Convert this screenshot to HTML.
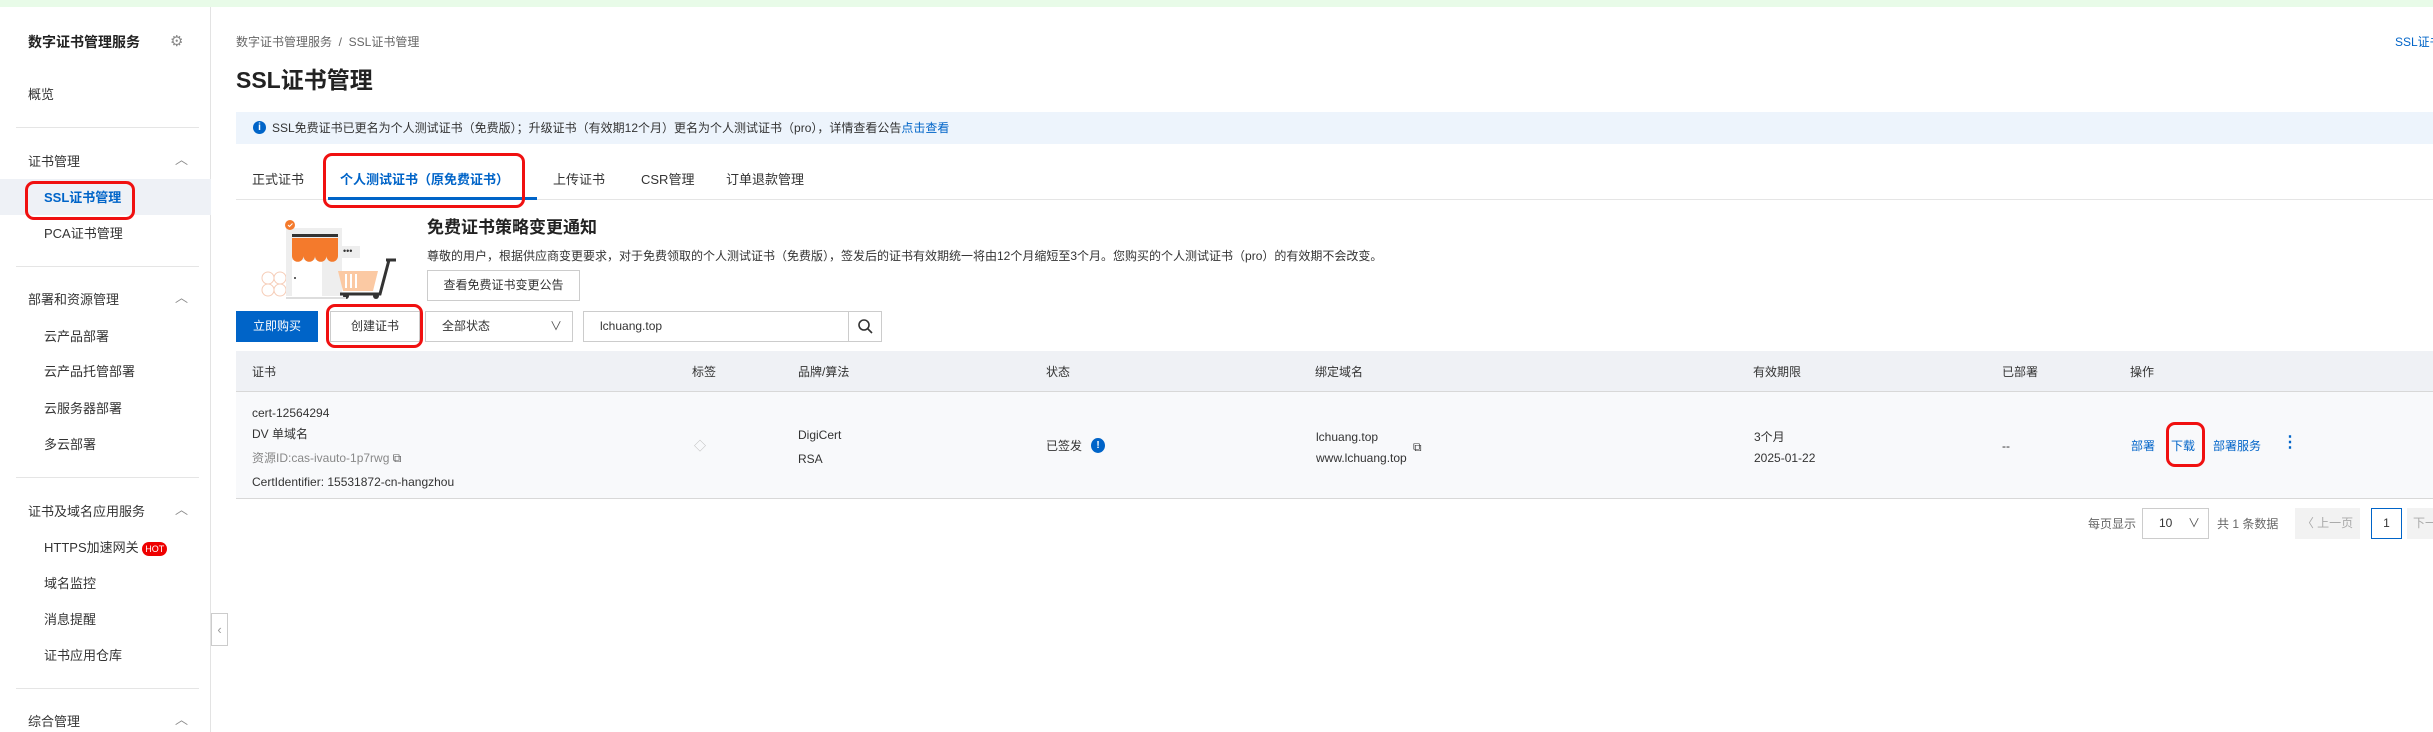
<!DOCTYPE html>
<html><head><meta charset="utf-8"><style>
*{margin:0;padding:0;box-sizing:border-box}
body{width:2433px;height:732px;overflow:hidden;background:#fff;font-family:"Liberation Sans","Noto Sans CJK SC",sans-serif;color:#333;position:relative;font-size:13px}
.a{position:absolute;white-space:nowrap;line-height:20px}
.blue{color:#0064c8}
.hr{position:absolute;height:1px;background:#e5e5e5}
.red{position:absolute;border:3px solid #f01010;border-radius:9px}
</style></head><body>
<div style="position:absolute;left:0;top:0;width:2433px;height:7px;background:#e8fbe8"></div>
<!-- sidebar -->
<div style="position:absolute;left:0;top:7px;width:211px;height:725px;border-right:1px solid #e3e3e3;background:#fff"></div>
<div class="a" style="left:28px;top:32px;font-size:14px;font-weight:bold;color:#222">数字证书管理服务</div>
<div class="a" style="left:170px;top:32px;font-size:15px;color:#888">⚙</div>
<div class="a" style="left:28px;top:85px">概览</div>
<div class="hr" style="left:16px;top:127px;width:183px"></div>
<div class="a" style="left:28px;top:152px">证书管理</div><div class="a" style="left:175px;top:150px;color:#888">︿</div>
<div style="position:absolute;left:0;top:179px;width:211px;height:36px;background:#eef1f6"></div>
<div class="a blue" style="left:44px;top:188px;font-weight:bold">SSL证书管理</div>
<div class="red" style="left:25px;top:181px;width:110px;height:39px"></div>
<div class="a" style="left:44px;top:224px">PCA证书管理</div>
<div class="hr" style="left:16px;top:266px;width:183px"></div>
<div class="a" style="left:28px;top:290px">部署和资源管理</div><div class="a" style="left:175px;top:288px;color:#888">︿</div>
<div class="a" style="left:44px;top:327px">云产品部署</div>
<div class="a" style="left:44px;top:362px">云产品托管部署</div>
<div class="a" style="left:44px;top:399px">云服务器部署</div>
<div class="a" style="left:44px;top:435px">多云部署</div>
<div class="hr" style="left:16px;top:477px;width:183px"></div>
<div class="a" style="left:28px;top:502px">证书及域名应用服务</div><div class="a" style="left:175px;top:500px;color:#888">︿</div>
<div class="a" style="left:44px;top:538px">HTTPS加速网关 <span style="display:inline-block;background:#e00;color:#fff;font-size:9px;line-height:14px;border-radius:7px;padding:0 3px;vertical-align:middle">HOT</span></div>
<div class="a" style="left:44px;top:574px">域名监控</div>
<div class="a" style="left:44px;top:610px">消息提醒</div>
<div class="a" style="left:44px;top:646px">证书应用仓库</div>
<div class="hr" style="left:16px;top:688px;width:183px"></div>
<div class="a" style="left:28px;top:712px">综合管理</div><div class="a" style="left:175px;top:710px;color:#888">︿</div>
<div style="position:absolute;left:211px;top:613px;width:17px;height:33px;border:1px solid #ccc;background:#fff;color:#999;font-size:13px;line-height:31px;text-align:center">‹</div>
<!-- main -->
<div class="a" style="left:236px;top:32px;font-size:12px;color:#666">数字证书管理服务 &nbsp;/&nbsp; SSL证书管理</div>
<div class="a blue" style="left:2395px;top:32px;font-size:12px">SSL证书</div>
<div class="a" style="left:236px;top:66px;font-size:23px;line-height:28px;font-weight:bold;color:#222">SSL证书管理</div>
<div style="position:absolute;left:236px;top:112px;width:2197px;height:32px;background:#edf4fc"></div>
<div style="position:absolute;left:253px;top:121px;width:13px;height:13px;border-radius:50%;background:#0064c8;color:#fff;font-size:10px;font-weight:bold;line-height:13px;text-align:center">i</div>
<div class="a" style="left:272px;top:118px;font-size:12px">SSL免费证书已更名为个人测试证书（免费版）；升级证书（有效期12个月）更名为个人测试证书（pro），详情查看公告<span class="blue">点击查看</span></div>
<div class="hr" style="left:236px;top:199px;width:2197px"></div>
<div class="a" style="left:252px;top:170px">正式证书</div>
<div class="a blue" style="left:340px;top:170px;font-weight:bold">个人测试证书（原免费证书）</div>
<div style="position:absolute;left:328px;top:197px;width:209px;height:3px;background:#0064c8"></div>
<div class="red" style="left:323px;top:153px;width:202px;height:55px"></div>
<div class="a" style="left:553px;top:170px">上传证书</div>
<div class="a" style="left:641px;top:170px">CSR管理</div>
<div class="a" style="left:726px;top:170px">订单退款管理</div>
<!-- illustration -->
<svg style="position:absolute;left:258px;top:218px" width="160" height="82" viewBox="0 0 160 82">
<circle cx="10" cy="60" r="6" fill="none" stroke="#f6cdb8"/><circle cx="22" cy="60" r="6" fill="none" stroke="#f6cdb8"/><circle cx="10" cy="72" r="6" fill="none" stroke="#f6cdb8"/><circle cx="22" cy="72" r="6" fill="none" stroke="#f6cdb8"/>
<rect x="28" y="10" width="56" height="68" fill="#eee"/><rect x="34" y="42" width="30" height="36" fill="#fff"/>
<circle cx="37" cy="60" r="1" fill="#333"/>
<rect x="34" y="16" width="46" height="3" fill="#333"/>
<path d="M34 20h46v18a5.75 5.75 0 0 1-11.5 0a5.75 5.75 0 0 1-11.5 0a5.75 5.75 0 0 1-11.5 0a5.75 5.75 0 0 1-11.5 0z" fill="#f47a2c"/>
<circle cx="32" cy="7" r="5" fill="#f47a2c"/><path d="M30 7l1.5 1.5 3-3" stroke="#fff" fill="none"/>
<rect x="82" y="28" width="20" height="12" fill="#eee"/><text x="85" y="36" font-size="9" fill="#333">•••</text>
<path d="M80 53h40l-5 20h-30z" fill="#fbc9a3"/>
<path d="M88 56v14M93 56v14M98 56v14" stroke="#fff" stroke-width="2"/>
<path d="M128 42h10M131 42l-9 34h-40" fill="none" stroke="#333" stroke-width="3"/>
<circle cx="88" cy="78" r="3" fill="#333"/><circle cx="118" cy="78" r="3" fill="#333"/>
<rect x="28" y="79" width="60" height="2" fill="#ddd"/>
</svg>
<div class="a" style="left:427px;top:217px;font-size:17px;line-height:22px;font-weight:bold;color:#222">免费证书策略变更通知</div>
<div class="a" style="left:427px;top:246px;font-size:12px">尊敬的用户，根据供应商变更要求，对于免费领取的个人测试证书（免费版），签发后的证书有效期统一将由12个月缩短至3个月。您购买的个人测试证书（pro）的有效期不会改变。</div>
<div class="a" style="left:427px;top:270px;width:153px;height:31px;border:1px solid #ccc;line-height:29px;text-align:center;font-size:12px">查看免费证书变更公告</div>
<!-- toolbar -->
<div class="a" style="left:236px;top:311px;width:82px;height:31px;background:#0064c8;color:#fff;line-height:31px;text-align:center;font-size:12px">立即购买</div>
<div class="a" style="left:330px;top:311px;width:90px;height:31px;border:1px solid #ccc;line-height:29px;text-align:center;font-size:12px">创建证书</div>
<div class="red" style="left:326px;top:304px;width:97px;height:44px"></div>
<div class="a" style="left:425px;top:311px;width:148px;height:31px;border:1px solid #ccc;line-height:29px;padding-left:16px;font-size:12px">全部状态<span style="position:absolute;right:10px;color:#555">∨</span></div>
<div class="a" style="left:583px;top:311px;width:299px;height:31px;border:1px solid #ccc;line-height:29px;padding-left:16px;font-size:12px">lchuang.top</div>
<div style="position:absolute;left:848px;top:311px;width:34px;height:31px;border-left:1px solid #ccc"></div>
<svg style="position:absolute;left:857px;top:318px" width="16" height="16"><circle cx="7" cy="7" r="5" fill="none" stroke="#333" stroke-width="1.6"/><path d="M11 11l4 4" stroke="#333" stroke-width="1.6"/></svg>
<!-- table -->
<div style="position:absolute;left:236px;top:351px;width:2197px;height:41px;background:#eff1f5;border-bottom:1px solid #d8d8d8"></div>
<div class="a" style="left:252px;top:362px;font-size:12px">证书</div>
<div class="a" style="left:692px;top:362px;font-size:12px">标签</div>
<div class="a" style="left:798px;top:362px;font-size:12px">品牌/算法</div>
<div class="a" style="left:1046px;top:362px;font-size:12px">状态</div>
<div class="a" style="left:1315px;top:362px;font-size:12px">绑定域名</div>
<div class="a" style="left:1753px;top:362px;font-size:12px">有效期限</div>
<div class="a" style="left:2002px;top:362px;font-size:12px">已部署</div>
<div class="a" style="left:2130px;top:362px;font-size:12px">操作</div>
<div style="position:absolute;left:236px;top:392px;width:2197px;height:107px;background:#f8f9fb;border-bottom:1px solid #d8d8d8"></div>
<div class="a" style="left:252px;top:403px;font-size:12px">cert-12564294</div>
<div class="a" style="left:252px;top:424px;font-size:12px">DV 单域名</div>
<div class="a" style="left:252px;top:448px;font-size:12px;color:#888">资源ID:cas-ivauto-1p7rwg <span style="color:#555">⧉</span></div>
<div class="a" style="left:252px;top:472px;font-size:12px">CertIdentifier: 15531872-cn-hangzhou</div>
<div class="a" style="left:694px;top:436px;font-size:12px;color:#bbb">◇</div>
<div class="a" style="left:798px;top:425px;font-size:12px">DigiCert</div>
<div class="a" style="left:798px;top:449px;font-size:12px">RSA</div>
<div class="a" style="left:1046px;top:436px;font-size:12px">已签发</div>
<div style="position:absolute;left:1091px;top:438px;width:14px;height:15px;border-radius:50%;background:#0064c8;color:#fff;font-size:10px;font-weight:bold;line-height:15px;text-align:center">!</div>
<div class="a" style="left:1316px;top:427px;font-size:12px">lchuang.top</div>
<div class="a" style="left:1316px;top:448px;font-size:12px">www.lchuang.top</div>
<div class="a" style="left:1413px;top:437px;font-size:12px">⧉</div>
<div class="a" style="left:1754px;top:427px;font-size:12px">3个月</div>
<div class="a" style="left:1754px;top:448px;font-size:12px">2025-01-22</div>
<div class="a" style="left:2002px;top:436px;font-size:12px">--</div>
<div class="a blue" style="left:2131px;top:436px;font-size:12px">部署</div>
<div class="a blue" style="left:2171px;top:436px;font-size:12px">下载</div>
<div class="a blue" style="left:2213px;top:436px;font-size:12px">部署服务</div>
<div class="a blue" style="left:2282px;top:433px;font-size:16px;font-weight:bold">⋮</div>
<div class="red" style="left:2166px;top:422px;width:39px;height:45px"></div>
<!-- pagination -->
<div class="a" style="left:2088px;top:514px;font-size:12px;color:#666">每页显示</div>
<div class="a" style="left:2142px;top:508px;width:67px;height:31px;border:1px solid #ccc;line-height:29px;padding-left:16px;font-size:12px">10<span style="position:absolute;right:8px;color:#555">∨</span></div>
<div class="a" style="left:2217px;top:514px;font-size:12px;color:#666">共 1 条数据</div>
<div class="a" style="left:2295px;top:508px;width:65px;height:31px;background:#f2f2f2;line-height:31px;text-align:center;font-size:12px;color:#aaa">〈 上一页</div>
<div class="a" style="left:2371px;top:508px;width:31px;height:31px;border:1px solid #0064c8;line-height:29px;text-align:center;font-size:12px">1</div>
<div class="a" style="left:2407px;top:508px;width:40px;height:31px;background:#f2f2f2;line-height:31px;padding-left:6px;font-size:12px;color:#aaa">下一</div>
</body></html>
